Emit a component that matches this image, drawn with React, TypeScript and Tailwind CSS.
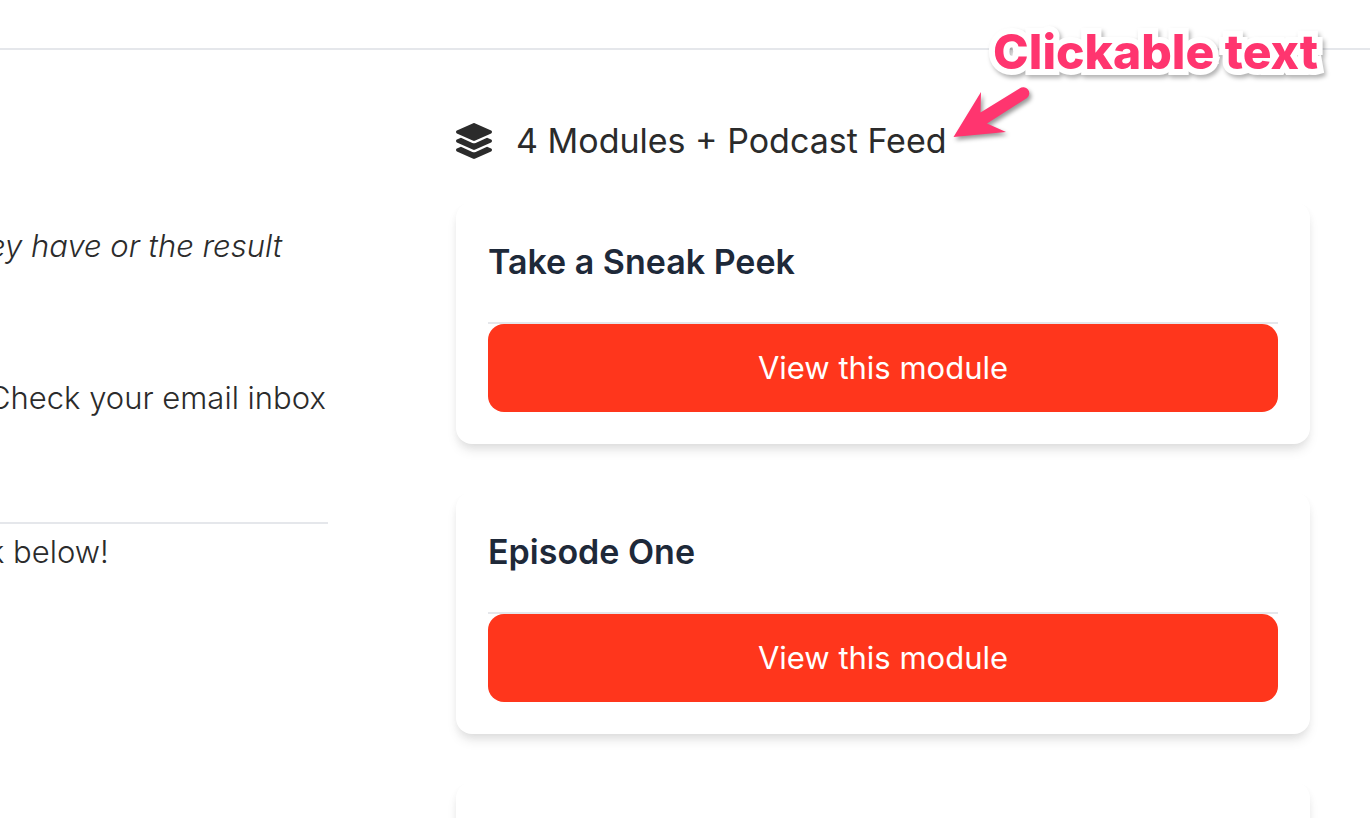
import * as React from "react"
import { FaLayerGroup } from "react-icons/fa"

const modules = ["Take a Sneak Peek", "Episode One"]

const ModuleCard = ({ title }: { title: string }) => (
  <article className="rounded-2xl bg-white p-8 shadow-[0_8px_12px_-2px_rgba(0,0,0,0.1),0_4px_8px_-2px_rgba(0,0,0,0.06)]">
    <h2 className="mb-8 text-[34px] leading-14 font-semibold text-gray-800">{title}</h2>
    <div className="border-t-2 border-gray-200">
      <button
        type="button"
        className="block h-22 w-full rounded-2xl bg-[#ff361c] text-center text-[31px] leading-12 text-white"
      >
        View this module
      </button>
    </div>
  </article>
)

const Callout = () => (
  <div className="pointer-events-none absolute top-5 right-[52px] w-[366px] text-[#ff356f]">
    <p className="text-right text-[48px] leading-16 font-extrabold whitespace-nowrap [-webkit-text-stroke:12px_white] [paint-order:stroke_fill] [stroke-linejoin:round] [filter:drop-shadow(2px_3px_2px_rgba(0,0,0,0.3))]">
      Clickable text
    </p>
    <svg
      viewBox="0 0 90 60"
      className="h-[60px] w-[90px] [filter:drop-shadow(2px_3px_2px_rgba(0,0,0,0.4))]"
      fill="currentColor"
      aria-hidden="true"
    >
      <path d="M1.500 53 L29 8 L28.500 28.500 L67.500 4.500 A6 6 0 0 1 75 14 L35 39.500 L54 48 Z" />
    </svg>
  </div>
)

const App = () => {
  return (
    <div className="relative h-screen overflow-hidden bg-white font-['Inter',sans-serif] text-[#2b2b2b]">
      <header className="h-[50px] border-b-2 border-gray-200" />

      <main className="grid grid-cols-[minmax(0,328fr)_minmax(0,854fr)] gap-32 pr-[60px]">
        <section className="pt-[168px] text-[31px] leading-14 font-light whitespace-nowrap">
          <p className="-ml-3 italic">ey have or the result</p>
          <p className="mt-24 -ml-3">Check your email inbox</p>
          <hr className="mt-24 border-t-2 border-gray-200" />
          <p className="-ml-3">k below!</p>
        </section>

        <section className="pt-[71px]">
          <a href="#modules" className="flex items-center gap-6 text-[34px] leading-10">
            <FaLayerGroup className="size-9" />
            <span>4 Modules + Podcast Feed</span>
          </a>

          <div id="modules" className="mt-[41px] flex flex-col gap-12">
            {modules.map((title) => (
              <ModuleCard key={title} title={title} />
            ))}
            {/* next module, still loading */}
            <div className="h-60 rounded-2xl bg-white shadow-[0_8px_12px_-2px_rgba(0,0,0,0.1),0_4px_8px_-2px_rgba(0,0,0,0.06)]" />
          </div>
        </section>
      </main>

      <Callout />
    </div>
  )
}

export default App
